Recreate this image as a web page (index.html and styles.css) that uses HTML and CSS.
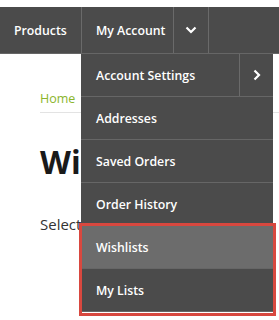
FILE: index.html
```html
<!DOCTYPE html>
<html>
<head>
<meta charset="utf-8">
<link rel="stylesheet" href="styles.css">
</head>
<body>
<nav class="topbar">
  <a class="nav-item products">Products</a>
  <div class="account">
    <a class="nav-item myaccount">My Account</a>
    <a class="nav-toggle"><svg width="12" height="8" viewBox="0 0 12 8"><path d="M1.5 1.5 L6 6 L10.5 1.5" fill="none" stroke="#fff" stroke-width="2.2"/></svg></a>
    <ul class="dropdown">
      <li class="dd-item has-sub"><span class="dd-label">Account Settings</span><span class="dd-arrow"><svg width="8" height="12" viewBox="0 0 8 12"><path d="M1.5 1.5 L6 6 L1.5 10.5" fill="none" stroke="#fff" stroke-width="2.2"/></svg></span></li>
      <li class="dd-item"><span class="dd-label">Addresses</span></li>
      <li class="dd-item"><span class="dd-label">Saved Orders</span></li>
      <li class="dd-item"><span class="dd-label">Order History</span></li>
      <li class="dd-item active"><span class="dd-label">Wishlists</span></li>
      <li class="dd-item"><span class="dd-label">My Lists</span></li>
      <li class="highlight-box"></li>
    </ul>
  </div>
  <div class="nav-fill"></div>
</nav>
<main class="content">
  <div class="breadcrumb"><a class="crumb">Home</a></div>
  <h1 class="title">Wishlists</h1>
  <p class="lead">Select a wishlist</p>
</main>
</body>
</html>
```

FILE: styles.css
```css
* { box-sizing: border-box; }
html, body { margin: 0; padding: 0; background: #fff; }
body {
  padding-top: 7px;
  font-family: "Open Sans", "Liberation Sans", sans-serif;
  overflow: hidden;
  height: 320px;
}
.topbar {
  display: flex;
  height: 47px;
  background: #4b4b4b;
  border-bottom: 1px solid #666;
  position: relative;
  z-index: 5;
}
.nav-item {
  display: flex;
  align-items: center;
  color: #fff;
  font-size: 12.3px;
  font-weight: 600;
  height: 46px;
}
.products {
  width: 82px;
  padding-left: 14px;
  border-right: 1px solid #6a6a6a;
}
.account {
  display: flex;
  position: relative;
}
.myaccount {
  width: 92px;
  padding-left: 14px;
  border-right: 1px solid #6a6a6a;
}
.nav-toggle {
  width: 35px;
  height: 46px;
  display: flex;
  align-items: center;
  justify-content: center;
  border-right: 1px solid #6a6a6a;
}
.nav-fill { flex: 1; }
.dropdown {
  position: absolute;
  left: -1px;
  top: 47px;
  width: 192px;
  margin: 0;
  padding: 0;
  list-style: none;
  background: #4b4b4b;
}
.dd-item {
  display: flex;
  height: 43px;
  border-bottom: 1px solid #666;
  color: #fff;
  font-size: 12.3px;
  font-weight: 600;
}
.dd-item:last-of-type { border-bottom: none; }
.dd-label {
  flex: 1;
  display: flex;
  align-items: center;
  padding-left: 15px;
}
.dd-arrow {
  width: 34px;
  display: flex;
  align-items: center;
  justify-content: center;
  border-left: 1px solid #6a6a6a;
}
.dd-item.active { background: #6c6c6c; }
.highlight-box {
  position: absolute;
  left: -2px;
  top: 169px;
  width: 197px;
  height: 93px;
  border: 3px solid #d8483f;
  pointer-events: none;
}
.content {
  padding: 0 0 0 40px;
}
.breadcrumb {
  padding-top: 32px;
  height: 59px;
  border-bottom: 1px solid #e3e3e3;
}
.crumb {
  color: #8ab52c;
  font-size: 12.5px;
}
.title {
  margin: 29px 0 0 0;
  font-size: 32px;
  font-weight: 700;
  line-height: 40px;
  color: #1a1a1a;
}
.lead {
  margin: 32px 0 0 0;
  font-size: 15px;
  color: #333;
}
```
